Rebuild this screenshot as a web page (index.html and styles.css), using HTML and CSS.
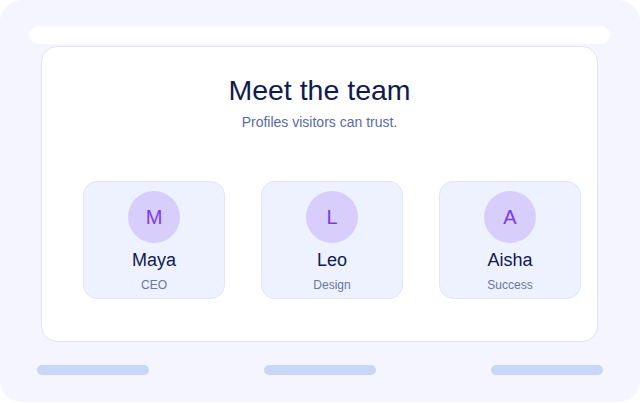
FILE: index.html
```html
<!DOCTYPE html>
<html lang="en">

<head>
  <meta charset="UTF-8">
  <meta name="viewport" content="width=device-width, initial-scale=1.0">
  <link rel="stylesheet" href="styles.css">
  <title>Meet the team</title>
</head>

<body>

  <div class="frame">
    <div class="top-bar"></div>

    <!-- team card -->
    <div class="team-card">
      <h1>Meet the team</h1>
      <p class="subtitle">Profiles visitors can trust.</p>

      <div class="team-grid">
        <div class="member">
          <div class="avatar">M</div>
          <span class="member-name">Maya</span>
          <span class="member-role">CEO</span>
        </div>
        <div class="member">
          <div class="avatar">L</div>
          <span class="member-name">Leo</span>
          <span class="member-role">Design</span>
        </div>
        <div class="member">
          <div class="avatar">A</div>
          <span class="member-name">Aisha</span>
          <span class="member-role">Success</span>
        </div>
      </div>
    </div>

    <div class="footer-bars">
      <div class="bar"></div>
      <div class="bar"></div>
      <div class="bar"></div>
    </div>
  </div>

</body>

</html>
```

FILE: styles.css
```css
body {
  font-family: "Liberation Sans", Arial, sans-serif;
  margin: 0;
  background-color: #ffffff;
}

.frame {
  width: 640px;
  height: 402px;
  box-sizing: border-box;
  background-color: #f4f5fe;
  border-radius: 22px;
  padding: 26px 30px 0 29px;
}

.top-bar {
  height: 18px;
  background-color: #ffffff;
  border-radius: 9px;
}

.team-card {
  height: 296px;
  box-sizing: border-box;
  margin: 2px 12px 0 12px;
  background-color: #ffffff;
  border: 1px solid #e1e4f9;
  border-radius: 16px;
  text-align: center;
  padding-top: 26px;
}

.team-card h1 {
  margin: 0;
  font-size: 28.5px;
  font-weight: normal;
  line-height: 34px;
  color: #0f1a4f;
}

.subtitle {
  margin: 7px 0 0 0;
  font-size: 14px;
  line-height: 17px;
  color: #5b6b9e;
}

.team-grid {
  display: grid;
  grid-template-columns: repeat(3, 142px);
  column-gap: 36px;
  margin-top: 50px;
  padding-left: 41px;
}

.member {
  height: 118px;
  box-sizing: border-box;
  display: flex;
  flex-direction: column;
  align-items: center;
  padding-top: 9px;
  background-color: #eef1fe;
  border: 1px solid #e2e6fb;
  border-radius: 14px;
}

.avatar {
  width: 52px;
  height: 52px;
  border-radius: 50%;
  background-color: #d8cefb;
  color: #7c3aed;
  font-size: 20px;
  line-height: 52px;
}

.member-name {
  margin-top: 6px;
  font-size: 18px;
  line-height: 22px;
  color: #0f1a4f;
}

.member-role {
  margin-top: 7px;
  font-size: 12px;
  line-height: 15px;
  color: #6a76a3;
}

.footer-bars {
  display: flex;
  gap: 115px;
  margin-top: 23px;
  margin-left: 8px;
}

.bar {
  width: 112px;
  height: 10px;
  background-color: #c8d7f7;
  border-radius: 5px;
}
```
